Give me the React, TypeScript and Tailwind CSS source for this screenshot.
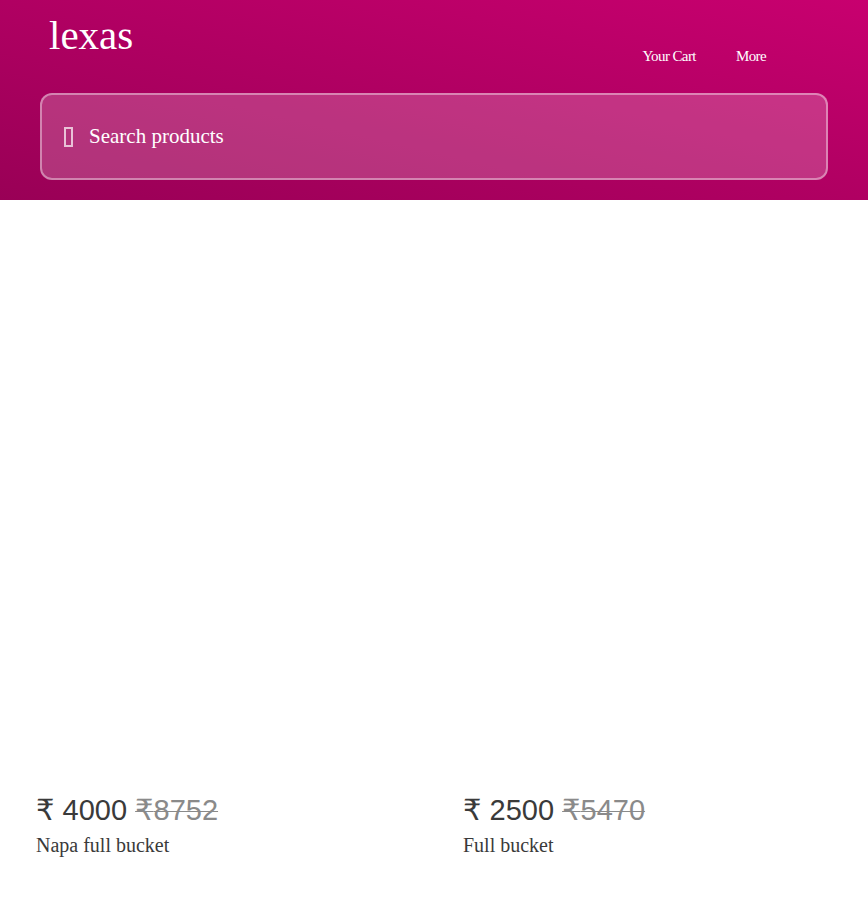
import React from "react";

const products = [
  { price: "4000", mrp: "8752", name: "Napa full bucket" },
  { price: "2500", mrp: "5470", name: "Full bucket" },
];

const serif = { fontFamily: '"Liberation Serif", "DejaVu Serif", serif' };
const sans = { fontFamily: '"Liberation Sans", "DejaVu Sans", sans-serif' };

export default function App() {
  return (
    <div className="min-h-[900px] w-full bg-white" style={serif}>
      <header className="h-[200px] bg-gradient-to-tr from-[#990056] via-[#b00062] to-[#c8006f] px-10 pt-[10px]">
        <div className="flex items-start justify-between">
          <div className="pl-[9px] text-[41px] leading-[50px] text-white">lexas</div>
          <nav className="mt-[36px] mr-[62px] flex gap-[40px] text-[15px] leading-[20px] tracking-[-0.6px] text-white">
            <a>Your Cart</a>
            <a>More</a>
          </nav>
        </div>
        <div className="mt-[27px] flex h-[87px] items-center gap-[16px] rounded-[12px] border-2 border-white/40 bg-white/20 pl-[22px]">
          <span className="block h-[20px] w-[9px] border-2 border-white/70" />
          <span className="text-[21px] text-white">Search products</span>
        </div>
      </header>

      <main className="grid grid-cols-2 gap-[58px] px-9">
        {products.map((p) => (
          <div key={p.name} className="flex flex-col">
            <div className="h-[591px]" />
            <div className="text-[29px] leading-[39px]" style={sans}>
              <span className="text-[#3a3a3a]">₹ {p.price}</span>{" "}
              <span className="text-[#8a8a8a] line-through decoration-1">₹{p.mrp}</span>
            </div>
            <div className="mt-[2px] text-[20px] leading-[26px] text-[#3a3a3a]">{p.name}</div>
          </div>
        ))}
      </main>
    </div>
  );
}
